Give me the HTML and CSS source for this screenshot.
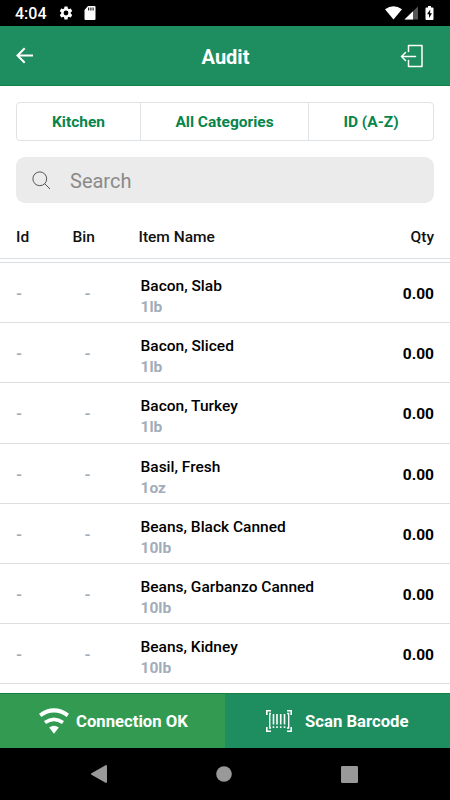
FILE: index.html
```html
<!DOCTYPE html>
<html lang="en">
<head>
<meta charset="utf-8">
<title>Audit</title>
<link rel="stylesheet" href="styles.css">
</head>
<body>
<div class="screen">
  <div class="status">
    <span class="clock">4:04</span>
    <svg class="gear" width="16" height="16" viewBox="0 0 24 24"><path fill="#fff" d="M19.14 12.94c.04-.3.06-.61.06-.94s-.02-.64-.07-.94l2.03-1.58a.5.5 0 0 0 .12-.61l-1.92-3.32a.5.5 0 0 0-.59-.22l-2.39.96a7 7 0 0 0-1.62-.94l-.36-2.54a.5.5 0 0 0-.48-.41h-3.84a.5.5 0 0 0-.47.41l-.36 2.54c-.59.24-1.13.57-1.62.94l-2.39-.96a.5.5 0 0 0-.59.22L2.74 8.870a.5.5 0 0 0 .12.61l2.03 1.58c-.05.3-.09.63-.09.94s.02.64.07.94l-2.03 1.58a.5.5 0 0 0-.12.61l1.92 3.32c.12.22.37.29.59.22l2.39-.96c.5.38 1.03.7 1.62.94l.36 2.54c.05.24.24.41.48.41h3.84c.24 0 .44-.17.47-.41l.36-2.54a6.8 6.8 0 0 0 1.62-.94l2.39.96c.22.08.47 0 .59-.22l1.92-3.32a.5.5 0 0 0-.12-.61zM12 15.600a3.600 3.600 0 1 1 0-7.200 3.600 3.600 0 0 1 0 7.200z"/></svg>
    <svg class="sd" width="12" height="14" viewBox="0 0 12 14"><path fill="#fff" d="M4 0h6.500Q11.500 0 11.500 1v12q0 1-1 1H1.500q-1 0-1-1V4z"/><path stroke="#000" stroke-width="1" d="M4.700 1.500v3M6.900 1.500v3M9.100 1.500v3"/></svg>
    <svg class="signals" width="50" height="14" viewBox="0 0 50 14"><path fill="#fff" d="M0 3.300Q8.500-3 17 3.300L8.500 13.500z"/><path fill="#555" d="M33 .5v13H19.500z"/><path fill="#fff" d="M28 5.300v8.200h-8.500z"/><path fill="#fff" d="M43 0h3v1.500h1.500q1 0 1 1V13q0 1-1 1h-6q-1 0-1-1V2.500q0-1 1-1H43z"/><path fill="#000" d="M45.300 3.500 42 8.300h2V12l3-4.800h-2z"/></svg>
  </div>
  <header class="appbar">
    <svg class="back" width="18" height="17" viewBox="0 0 18 17"><path d="M17 8.500H1.500M8.700 1.300 1.500 8.500l7.200 7.200" fill="none" stroke="#fff" stroke-width="2"/></svg>
    <h1>Audit</h1>
    <svg class="exit" width="24" height="24" viewBox="0 0 24 24" fill="none" stroke="#fff" stroke-width="1.500" stroke-linejoin="round" stroke-linecap="round"><path d="M8.500 7.500V1.500h13.500v21H8.500v-6"/><path d="M15.500 12.500H1.500M5.500 8.500l-4 4 4 4"/></svg>
  </header>
  <main class="content">
    <div class="filters">
      <div class="filter">Kitchen</div>
      <div class="filter">All Categories</div>
      <div class="filter">ID (A-Z)</div>
    </div>
    <div class="search">
      <svg width="19" height="19" viewBox="0 0 19 19" fill="none" stroke="#555" stroke-width="1"><circle cx="7.800" cy="7.800" r="6.900"/><path d="m12.700 12.700 5.300 5.300"/></svg>
      <span>Search</span>
    </div>
    <div class="cols heading"><span>Id</span><span>Bin</span><span class="title">Item Name</span><span class="qty">Qty</span></div>
    <div class="list">
      <div class="cols item"><span class="dash">-</span><span class="dash bin">-</span><div class="name"><p>Bacon, Slab</p><p class="unit">1lb</p></div><span class="qty">0.00</span></div>
      <div class="cols item"><span class="dash">-</span><span class="dash bin">-</span><div class="name"><p>Bacon, Sliced</p><p class="unit">1lb</p></div><span class="qty">0.00</span></div>
      <div class="cols item"><span class="dash">-</span><span class="dash bin">-</span><div class="name"><p>Bacon, Turkey</p><p class="unit">1lb</p></div><span class="qty">0.00</span></div>
      <div class="cols item"><span class="dash">-</span><span class="dash bin">-</span><div class="name"><p>Basil, Fresh</p><p class="unit">1oz</p></div><span class="qty">0.00</span></div>
      <div class="cols item"><span class="dash">-</span><span class="dash bin">-</span><div class="name"><p>Beans, Black Canned</p><p class="unit">10lb</p></div><span class="qty">0.00</span></div>
      <div class="cols item"><span class="dash">-</span><span class="dash bin">-</span><div class="name"><p>Beans, Garbanzo Canned</p><p class="unit">10lb</p></div><span class="qty">0.00</span></div>
      <div class="cols item"><span class="dash">-</span><span class="dash bin">-</span><div class="name"><p>Beans, Kidney</p><p class="unit">10lb</p></div><span class="qty">0.00</span></div>
    </div>
  </main>
  <footer class="actions">
    <div class="connection">
      <svg width="30" height="26" viewBox="0 0 30 26"><path fill="none" stroke="#fff" stroke-width="4" d="M1.200 7.300Q15-2.500 28.800 7.300"/><path fill="none" stroke="#fff" stroke-width="3.500" d="M6 14.500q9-6.300 18 0"/><path fill="#fff" d="M10.200 19.500q4.800-3.500 9.600 0L15 25.800z"/></svg>
      <span>Connection OK</span>
    </div>
    <div class="scan">
      <svg width="26" height="22" viewBox="0 0 26 22" fill="none" stroke="#fff"><path stroke-width="1.600" d="M5 .8H.8V5M21 .8h4.200V5M5 21.200H.8V17M21 21.200h4.200V17"/><path stroke-width="1.300" d="M5 3.500H3.800v14.500H5M21 3.500h1.700v14.500H21"/><path stroke-width="1.600" d="M7.500 4v10.500M11 4v10.500M14.700 4v10.500M18.500 4v10.500M7.500 16.300V18M11 16.300V18M14.700 16.300V18M18.500 16.300V18"/></svg>
      <span>Scan Barcode</span>
    </div>
  </footer>
  <nav class="navbar">
    <svg width="16" height="18" viewBox="0 0 16 18"><path fill="#999" d="M.5 8.300 14.500.2q1.500-.4 1.500 1v15.600q0 1.500-1.500 1L.5 9.700q-1-.7 0-1.400z"/></svg>
    <svg width="16" height="16" viewBox="0 0 16 16"><circle cx="8" cy="8" r="7.800" fill="#999"/></svg>
    <svg width="17" height="17" viewBox="0 0 17 17"><rect width="17" height="17" rx="1.200" fill="#999"/></svg>
  </nav>
</div>
</body>
</html>
```
FILE: styles.css
```css
* { box-sizing: border-box; }
body { margin: 0; background: #fff; font-family: Roboto, sans-serif; color: #111; }
h1, p { margin: 0; }
svg { display: block; flex: none; }
.screen { width: 450px; height: 800px; display: flex; flex-direction: column; overflow: hidden; }
.status { height: 26px; flex: none; background: #000; color: #fff; display: flex; align-items: center; padding: 0 15px; }
.clock { font-size: 16px; font-weight: 500; line-height: 26px; padding-top: 2px; }
.gear { margin-left: 11px; }
.sd { margin-left: 10px; }
.signals { margin-left: auto; }
.appbar { height: 60px; flex: none; background: #1e8e60; border-bottom: 1px solid #128047; color: #fff; display: grid; grid-template-columns: 50px 1fr 50px; align-items: center; }
.back { margin-left: 16px; }
.appbar h1 { font-size: 20px; font-weight: 700; text-align: center; line-height: 24px; padding: 2px 0 0 1px; }
.exit { margin-left: 0; }
.content { flex: 1; min-height: 0; overflow: hidden; }
.filters { margin: 16px 16px 0; height: 39px; border: 1px solid #dfe3e5; border-radius: 4px; display: grid; grid-template-columns: 123px 168px 1fr; }
.filter { display: flex; align-items: center; justify-content: center; color: #07854b; font-size: 15.500px; font-weight: 700; }
.filter + .filter { border-left: 1px solid #dfe3e5; }
.search { margin: 16px 16px 0; height: 46px; border-radius: 9px; background: #ebebeb; display: flex; align-items: center; gap: 19px; padding: 1px 16px 0; font-size: 20px; color: #8a8a8a; }
.cols { display: grid; grid-template-columns: 56.500px 68px 1fr 60px; padding: 0 16px; align-items: center; }
.heading { height: 56px; padding-top: 12px; font-size: 15.500px; font-weight: 500; border-bottom: 1px solid #dcdfe1; }
.heading .title { margin-left: -2px; }
.list { margin-top: 3px; border-top: 1px solid #dcdfe1; }
.item { height: 60.200px; padding-top: 3px; border-bottom: 1px solid #dcdfe1; font-size: 15.500px; font-weight: 500; color: #000; }
.name { padding-top: 6px; }
.item p { line-height: 21px; }
.item .unit, .dash { color: #a3acb9; font-weight: 700; }
.bin { padding-left: 12px; }
.qty { text-align: right; }
.item .qty { font-weight: 700; }
.actions { height: 55px; flex: none; display: grid; grid-template-columns: 1fr 1fr; color: #fff; font-size: 16.700px; font-weight: 700; border-top: 1px solid #138144; }
.connection, .scan { display: flex; align-items: center; }
.connection { background: #339b51; padding-left: 39px; gap: 7px; }
.scan { background: #1e8e60; padding-left: 41px; gap: 13px; }
.navbar { height: 52px; flex: none; background: #000; display: flex; align-items: center; justify-content: space-between; padding: 0 92px 0 91px; }
```
